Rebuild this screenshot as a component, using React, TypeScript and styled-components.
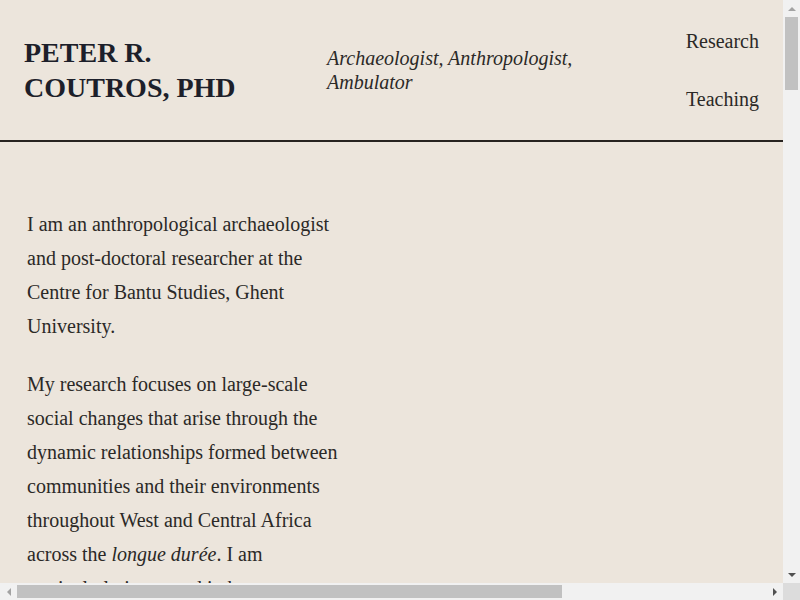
import styled, { createGlobalStyle } from "styled-components";

const GlobalStyle = createGlobalStyle`
  html, body {
    margin: 0;
    padding: 0;
    background-color: #ece5dc;
    overflow: hidden;
  }
  body {
    font-family: "Liberation Serif", "Times New Roman", serif;
    color: #2b2927;
  }
`;

// Browser window: page area plus classic scrollbars
const Window = styled.div`
  display: grid;
  grid-template-columns: 783px 17px;
  grid-template-rows: 583px 17px;
  width: 800px;
  height: 600px;
`;

const Page = styled.div`
  overflow: hidden;
  background-color: #ece5dc;
`;

const Header = styled.header`
  display: flex;
  align-items: center;
  width: 783px;
  height: 142px;
  box-sizing: border-box;
  padding: 0 24px;
  border-bottom: 2px solid #272320;
`;

const Title = styled.h1`
  width: 260px;
  margin: 0;
  font-size: 28px;
  line-height: 35px;
  font-weight: bold;
  color: #1d1f2a;
  text-transform: uppercase;
`;

const Tagline = styled.p`
  width: 300px;
  margin: 0 0 0 43px;
  font-size: 20px;
  line-height: 24px;
  font-style: italic;
  color: #2b2927;
`;

const Nav = styled.nav`
  display: flex;
  flex-direction: column;
  align-items: flex-end;
  gap: 34px;
  margin-left: auto;
`;

const NavLink = styled.a`
  font-size: 20px;
  line-height: 24px;
  color: #2b2927;
  text-decoration: none;
`;

const Main = styled.main`
  display: grid;
  grid-template-columns: 320px 1fr;
  gap: 48px;
  width: 1076px;
  box-sizing: border-box;
  padding: 65px 24px 0 27px;
`;

const TextColumn = styled.section`
  font-size: 20px;
  line-height: 34px;

  p {
    margin: 0 0 24px;
  }
`;

const Figures = styled.aside`
  min-height: 400px;
`;

const ScrollBar = styled.div<{ $vertical?: boolean }>`
  display: flex;
  flex-direction: ${({ $vertical }) => ($vertical ? "column" : "row")};
  background-color: #f1f1f1;
`;

const ArrowButton = styled.div`
  flex: 0 0 17px;
  display: flex;
  align-items: center;
  justify-content: center;
`;

const Arrow = styled.span<{ $dir: "up" | "down" | "left" | "right"; $active?: boolean }>`
  width: 0;
  height: 0;
  border: 4px solid transparent;
  ${({ $dir, $active }) => {
    const c = $active ? "#505050" : "#a3a3a3";
    if ($dir === "up") return `border-bottom-color: ${c}; border-top-width: 0;`;
    if ($dir === "down") return `border-top-color: ${c}; border-bottom-width: 0;`;
    if ($dir === "left") return `border-right-color: ${c}; border-left-width: 0;`;
    return `border-left-color: ${c}; border-right-width: 0;`;
  }}
`;

const Track = styled.div<{ $vertical?: boolean }>`
  flex: 1;
  display: flex;
  flex-direction: ${({ $vertical }) => ($vertical ? "column" : "row")};
  padding: ${({ $vertical }) => ($vertical ? "0 2px" : "2px 0")};
`;

const Thumb = styled.div<{ $length: number }>`
  flex: 0 0 ${({ $length }) => $length}px;
  background-color: #c1c1c1;
`;

const Corner = styled.div`
  background-color: #dcdcdc;
`;

export default function App() {
  return (
    <Window>
      <GlobalStyle />
      <Page>
        <Header>
          <Title>Peter R. Coutros, PhD</Title>
          <Tagline>Archaeologist, Anthropologist, Ambulator</Tagline>
          <Nav>
            <NavLink href="#research">Research</NavLink>
            <NavLink href="#teaching">Teaching</NavLink>
          </Nav>
        </Header>
        <Main>
          <TextColumn>
            <p>
              I am an anthropological archaeologist and post-doctoral researcher at the
              Centre for Bantu Studies, Ghent University.
            </p>
            <p>
              My research focuses on large-scale social changes that arise through the
              dynamic relationships formed between communities and their environments
              throughout West and Central Africa across the <em>longue durée</em>. I am
              particularly interested in how associations between people, places and
              landscapes shape settlement, mobility and exchange over many centuries.
            </p>
            <p>
              My fieldwork combines survey, excavation and ceramic analysis with
              ethnographic and historical sources, working alongside local communities
              and colleagues in Senegal, Mali and the Democratic Republic of the Congo.
            </p>
          </TextColumn>
          <Figures />
        </Main>
      </Page>
      <ScrollBar $vertical>
        <ArrowButton>
          <Arrow $dir="up" />
        </ArrowButton>
        <Track $vertical>
          <Thumb $length={73} />
        </Track>
        <ArrowButton>
          <Arrow $dir="down" $active />
        </ArrowButton>
      </ScrollBar>
      <ScrollBar>
        <ArrowButton>
          <Arrow $dir="left" />
        </ArrowButton>
        <Track>
          <Thumb $length={545} />
        </Track>
        <ArrowButton>
          <Arrow $dir="right" $active />
        </ArrowButton>
      </ScrollBar>
      <Corner />
    </Window>
  );
}
